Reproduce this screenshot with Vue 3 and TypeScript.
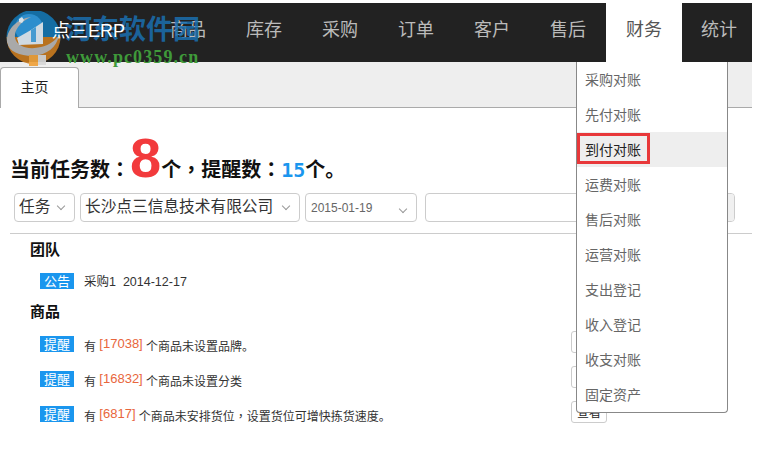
<script setup lang="ts">
const navItems = ['商品', '库存', '采购', '订单', '客户', '售后', '财务', '统计']
const menuItems = ['采购对账', '先付对账', '到付对账', '运费对账', '售后对账', '运营对账', '支出登记', '收入登记', '收支对账', '固定资产']

const reminders = [
  { count: '17038', text: '个商品未设置品牌。' },
  { count: '16832', text: '个商品未设置分类' },
  { count: '6817', text: '个商品未安排货位', tail: '设置货位可增快拣货速度。' },
]
</script>

<template>
  <div class="page">
    <nav class="topbar">
      <div class="brand">点三ERP</div>
      <div
        v-for="item in navItems"
        :key="item"
        class="nav-item"
        :class="{ active: item === '财务' }"
      >
        {{ item }}
        <ul v-if="item === '财务'" class="menu">
          <li v-for="m in menuItems" :key="m" :class="{ hover: m === '到付对账' }">
            {{ m }}
            <span v-if="m === '到付对账'" class="mark"></span>
          </li>
        </ul>
      </div>
    </nav>

    <div class="tabs">
      <div class="tab">主页</div>
    </div>

    <h1 class="summary"><span>当前任务数<span class="punct">：</span></span><span class="big">8</span><span>个<span class="punct">，</span>提醒数<span class="punct">：</span></span><span class="blue">15</span><span>个。</span></h1>

    <div class="filters">
      <div class="select s-type">任务<i class="chev"></i></div>
      <div class="select s-company">长沙点三信息技术有限公司<i class="chev"></i></div>
      <div class="select s-date">2015-01-19<i class="chev"></i></div>
      <div class="search"><span class="addon"></span></div>
    </div>

    <div class="list">
      <h2>团队</h2>
      <div class="row notice">
        <span class="badge">公告</span>
        <span class="notice-text">采购1&nbsp; 2014-12-17</span>
      </div>
      <h2 class="goods">商品</h2>
      <div v-for="r in reminders" :key="r.count" class="row reminder">
        <span class="badge">提醒</span>
        <span class="line">有 <em>[{{ r.count }}]</em> {{ r.text }}<template v-if="r.tail"><span class="punct">，</span>{{ r.tail }}</template></span>
        <button class="view">查看</button>
      </div>
    </div>

    <div class="watermark">
      <svg class="wm-logo" width="58" height="60" viewBox="0 0 58 60">
        <defs>
          <clipPath id="wm"><circle cx="28.5" cy="26" r="27" /></clipPath>
        </defs>
        <g clip-path="url(#wm)">
          <rect width="58" height="30" fill="#1474ae" />
          <rect y="26" width="58" height="30" fill="#c5791f" />
          <circle cx="24" cy="17" r="14" fill="#2f98dc" />
          <path d="M2 32C1 18 12 8 26 6 15 11 9 19 10 27 12 36 24 39 36 36 44 34 50 30 54 24 52 36 42 44 28 45 14 45 4 40 2 32z" fill="#b5b5b5" />
          <path d="M12 27l14-8 12-8v22l-24 1z" fill="#dfeaf3" />
          <path d="M26 19l5-3v15h-5z" fill="#4aa6e0" />
          <path d="M14 8l3-2 2 3-2 3-3-1z" fill="#e8f4fc" />
        </g>
        <rect x="24" y="44" width="9" height="11" fill="#f0a23c" />
        <rect x="33" y="44" width="8" height="10" fill="#d8d8d8" />
      </svg>
      <div class="wm-name">河东软件园</div>
      <div class="wm-url">www.pc0359.cn</div>
    </div>
  </div>
</template>

<style>
html,
body {
  margin: 0;
  background: #fff;
}
</style>

<style scoped>
.page {
  position: relative;
  width: 752px;
  height: 450px;
  padding-top: 3px;
  box-sizing: border-box;
  overflow: hidden;
  font-family: 'Liberation Sans', 'Noto Sans CJK SC', sans-serif;
  color: #222;
}

.topbar {
  display: flex;
  height: 59px;
  background: #222;
  color: #bbb;
  font-size: 18px;
}

.brand {
  position: relative;
  z-index: 4;
  width: 98px;
  padding-left: 52px;
  line-height: 56px;
  color: #fff;
  font-size: 18px;
  white-space: nowrap;
}

.nav-item {
  position: relative;
  width: 76px;
  line-height: 54px;
  text-align: center;
}

.nav-item:last-child {
  width: 70px;
  box-sizing: border-box;
  padding-left: 4px;
}

.nav-item.active {
  background: #fff;
  color: #555;
}

.menu {
  position: absolute;
  z-index: 2;
  top: 59px;
  left: -30px;
  width: 150px;
  margin: 0;
  padding: 0;
  list-style: none;
  background: #fff;
  border: 1px solid #888;
  border-top: 0;
  border-radius: 0 0 4px 4px;
  font-size: 14px;
  color: #666;
  text-align: left;
}

.menu li {
  position: relative;
  height: 35px;
  line-height: 36px;
  padding-left: 8px;
}

.menu li.hover {
  background: #eee;
  color: #222;
}

.mark {
  position: absolute;
  left: 0;
  top: 1px;
  width: 67px;
  height: 25px;
  border: 3px solid #e8383a;
}

.tabs {
  height: 46px;
  padding-top: 5px;
  box-sizing: border-box;
  background: #eee;
  border-bottom: 1px solid #aaa;
}

.tab {
  width: 79px;
  height: 41px;
  padding-right: 10px;
  box-sizing: border-box;
  background: #fff;
  border: 1px solid #aaa;
  border-bottom: 0;
  border-radius: 4px 4px 0 0;
  line-height: 38px;
  text-align: center;
  font-size: 14px;
}

.summary {
  display: flex;
  align-items: baseline;
  height: 67px;
  margin: 0;
  padding: 18px 0 0 10px;
  font-size: 20px;
  line-height: 64px;
  font-weight: 700;
  color: #111;
  white-space: nowrap;
}

.punct {
  font-family: 'Noto Sans CJK TC', sans-serif;
}

.big {
  font-size: 56px;
  color: #f23a3c;
  line-height: 64px;
}

.blue {
  font-family: 'DejaVu Sans Mono', monospace;
  color: #1a96ee;
}

.filters {
  display: flex;
  gap: 5px;
  height: 40px;
  margin-left: 10px;
  padding: 0 0 0 4px;
  border-bottom: 1px solid #ccc;
}

.select {
  position: relative;
  height: 29px;
  box-sizing: border-box;
  border: 1px solid #ccc;
  border-radius: 4px;
  padding-left: 4px;
  line-height: 26px;
  font-size: 15.7px;
  color: #333;
  white-space: nowrap;
}

.s-type {
  width: 61px;
}

.s-company {
  width: 220px;
}

.s-date {
  width: 112px;
  padding-left: 5px;
  font-size: 12px;
  color: #666;
  line-height: 28px;
}

.search {
  display: flex;
  justify-content: flex-end;
  width: 310px;
  height: 29px;
  margin-left: 3px;
  box-sizing: border-box;
  border: 1px solid #ccc;
  border-radius: 4px;
  overflow: hidden;
}

.addon {
  width: 10px;
  background: #f0f0f0;
}

.chev {
  position: absolute;
  right: 10px;
  top: 9px;
  width: 5px;
  height: 5px;
  border-right: 1px solid #999;
  border-bottom: 1px solid #999;
  transform: rotate(45deg);
}

.s-date .chev {
  top: 12px;
}

.list {
  padding-left: 30px;
}

h2 {
  margin: 0;
  height: 32px;
  font-size: 15px;
  line-height: 32px;
  font-weight: 700;
  color: #111;
}

h2.goods {
  height: 30px;
}

.row {
  display: flex;
  align-items: center;
  margin-left: 10px;
}

.notice {
  height: 30px;
}

.reminder {
  height: 35px;
}

.badge {
  width: 34px;
  height: 16px;
  margin-right: 10px;
  background: #1a96ee;
  color: #fff;
  font-size: 13px;
  line-height: 17px;
  text-align: center;
}

.notice-text {
  margin-top: -2px;
  font-size: 12.5px;
  color: #333;
}

.line {
  width: 487px;
  padding-top: 4px;
  font-size: 12px;
  color: #333;
  white-space: nowrap;
}

.line em {
  position: relative;
  top: -3px;
  font-style: normal;
  font-size: 13px;
  color: #e8663c;
}

.view {
  width: 36px;
  height: 22px;
  margin-top: -4px;
  padding: 0;
  background: #fff;
  border: 1px solid #ccc;
  border-radius: 3px;
  font: 12px 'Liberation Sans', 'Noto Sans CJK SC', sans-serif;
  color: #222;
}

.watermark {
  position: absolute;
  z-index: 3;
  left: 0;
  top: 0;
  width: 220px;
  height: 70px;
  pointer-events: none;
}

.wm-logo {
  position: absolute;
  left: 5px;
  top: 11px;
  opacity: 0.92;
}

.wm-name {
  position: absolute;
  left: 65px;
  top: 10px;
  font-size: 27px;
  line-height: 40px;
  font-weight: 700;
  color: #1a6fb0;
  opacity: 0.85;
  white-space: nowrap;
}

.wm-url {
  position: absolute;
  left: 66px;
  top: 47px;
  font: 700 18px/20px 'Liberation Serif', serif;
  letter-spacing: 1.1px;
  color: #3f9a3a;
  white-space: nowrap;
}
</style>
